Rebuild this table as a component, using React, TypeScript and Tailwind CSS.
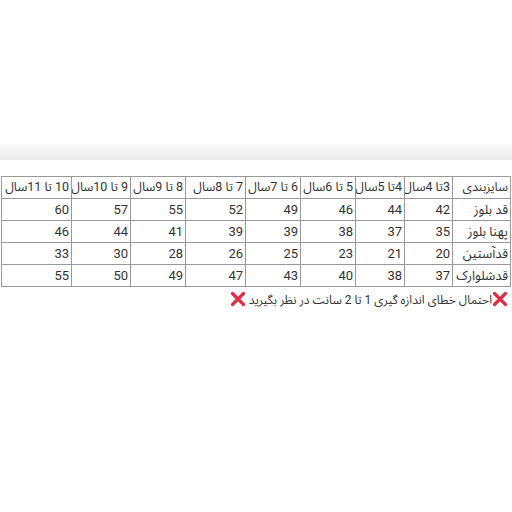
const headers = [
  "سایزبندی",
  "3تا 4سال",
  "4تا 5سال",
  "5 تا 6سال",
  "6 تا 7سال",
  "7 تا 8سال",
  "8 تا 9سال",
  "9 تا 10سال",
  "10 تا 11سال",
]

const rows = [
  ["قد بلوز", "42", "44", "46", "49", "52", "55", "57", "60"],
  ["پهنا بلوز", "35", "37", "38", "39", "39", "41", "44", "46"],
  ["قدآستین", "20", "21", "23", "25", "26", "28", "30", "33"],
  ["قدشلوارک", "37", "38", "40", "43", "47", "49", "50", "55"],
]

// column widths right to left
const widths = ["w-[58px]", "w-[48px]", "w-[49px]", "w-[55px]", "w-[55px]", "w-[60px]", "w-[55px]", "w-[59px]", "w-[70px]"]

const RedX = () => (
  <svg width="16" height="16" viewBox="0 0 16 16" className="inline-block align-[-3px]">
    <path d="M2.5 2.5 L13.5 13.5 M13.5 2.5 L2.5 13.5" stroke="#dd2e44" strokeWidth="3.2" strokeLinecap="round" />
  </svg>
)

const App = () => {
  return (
    <div className="w-[512px] h-[512px] bg-white overflow-hidden text-[#333] font-['Roboto','Noto_Sans_Arabic',sans-serif]">
      <div className="h-[145px]" />
      <div className="h-[15px] bg-gradient-to-b from-[#f9f9f9] to-[#ececec]" />
      <div className="h-[16px]" />
      <div dir="rtl" className="pr-[1px] pl-[2px]">
        <table className="w-[509px] border-collapse table-fixed text-[12.5px] leading-none">
          <colgroup>
            {widths.map((w, i) => (
              <col key={i} className={w} />
            ))}
          </colgroup>
          <thead>
            <tr className="h-[22px]">
              {headers.map((h, i) => (
                <td key={i} className="border border-[#999] px-[2px] whitespace-nowrap overflow-hidden text-right">
                  {h}
                </td>
              ))}
            </tr>
          </thead>
          <tbody>
            {rows.map((r, ri) => (
              <tr key={ri} className="h-[22px]">
                {r.map((c, ci) => (
                  <td key={ci} className="border border-[#999] px-[2px] whitespace-nowrap text-right text-[13px]">
                    {c}
                  </td>
                ))}
              </tr>
            ))}
          </tbody>
        </table>
        <div className="mt-[4px] pr-[3px] text-[12px] text-[#333] leading-none">
          <RedX />
          احتمال خطای اندازه گیری 1 تا 2 سانت در نظر بگیرید <RedX />
        </div>
      </div>
    </div>
  )
}

export default App
